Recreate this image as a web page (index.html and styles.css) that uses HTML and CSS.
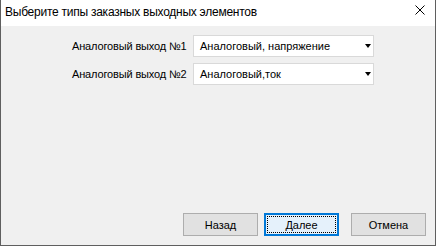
FILE: index.html
```html
<!DOCTYPE html>
<html>
<head>
<meta charset="utf-8">
<link rel="stylesheet" href="styles.css">
</head>
<body>
<div class="window">
  <div class="titlebar">
    <span class="title">Выберите типы заказных выходных элементов</span>
    <svg class="close" width="10" height="10" viewBox="0 0 10 10"><path d="M0.5 0.5 L9.5 9.5 M9.5 0.5 L0.5 9.5" stroke="#000" stroke-width="1" fill="none"/></svg>
  </div>
  <div class="content">
    <div class="form">
      <span class="label">Аналоговый выход №1</span>
      <div class="combo"><span>Аналоговый, напряжение</span><span class="arrow"></span></div>
      <span class="label">Аналоговый выход №2</span>
      <div class="combo"><span>Аналоговый,ток</span><span class="arrow"></span></div>
    </div>
    <div class="buttons">
      <button class="btn">Назад</button>
      <button class="btn default"><span class="focus">Далее</span></button>
      <button class="btn cancel">Отмена</button>
    </div>
  </div>
</div>
</body>
</html>
```
FILE: styles.css
```css
* { box-sizing: border-box; }
html, body { margin: 0; padding: 0; background: #fff; }
.window {
  width: 436px;
  height: 246px;
  border: 1px solid #5f5f5f;
  border-top: none;
  display: flex;
  flex-direction: column;
  font-family: "Liberation Sans", Arial, sans-serif;
}
.titlebar {
  height: 26px;
  background: #fff;
  display: flex;
  align-items: center;
  padding-left: 4px;
  padding-right: 10px;
  justify-content: space-between;
}
.title {
  font-family: "Liberation Sans", Arial, sans-serif;
  font-size: 12px;
  letter-spacing: -0.25px;
  color: #000;
  margin-top: -2px;
}
.close { margin-top: -6px; }
.content {
  flex: 1;
  background: #f0f0f0;
  display: flex;
  flex-direction: column;
  padding: 9px 9px 9px 0;
}
.form {
  display: grid;
  grid-template-columns: 113px 181px;
  grid-auto-rows: 22px;
  column-gap: 8px;
  row-gap: 6px;
  padding-left: 71px;
  align-items: center;
}
.label {
  font-size: 11px;
  color: #000;
  white-space: nowrap;
  letter-spacing: -0.15px;
}
.combo {
  height: 22px;
  background: #fff;
  border: 1px solid #d9d9d9;
  display: flex;
  align-items: center;
  justify-content: space-between;
  padding: 0 1px 0 6px;
  font-size: 11px;
  color: #000;
}
.arrow {
  width: 0;
  height: 0;
  margin-right: 1px;
  border-left: 3.5px solid transparent;
  border-right: 3.5px solid transparent;
  border-top: 4px solid #000;
}
.buttons {
  margin-top: auto;
  display: flex;
  justify-content: flex-end;
  gap: 6px;
}
.btn {
  width: 75px;
  height: 23px;
  background: #e1e1e1;
  border: 1px solid #adadad;
  font-family: "Liberation Sans", Arial, sans-serif;
  font-size: 11px;
  color: #000;
  padding: 0;
  display: flex;
  align-items: center;
  justify-content: center;
}
.btn.cancel { margin-left: 6px; }
.btn.default {
  background: #e5f1fb;
  border: 1px solid #0078d7;
  box-shadow: inset 0 0 0 1px #0078d7;
  padding: 2px;
}
.focus {
  width: 100%;
  height: 100%;
  border: 1px dotted #000;
  display: flex;
  align-items: center;
  justify-content: center;
}
```
